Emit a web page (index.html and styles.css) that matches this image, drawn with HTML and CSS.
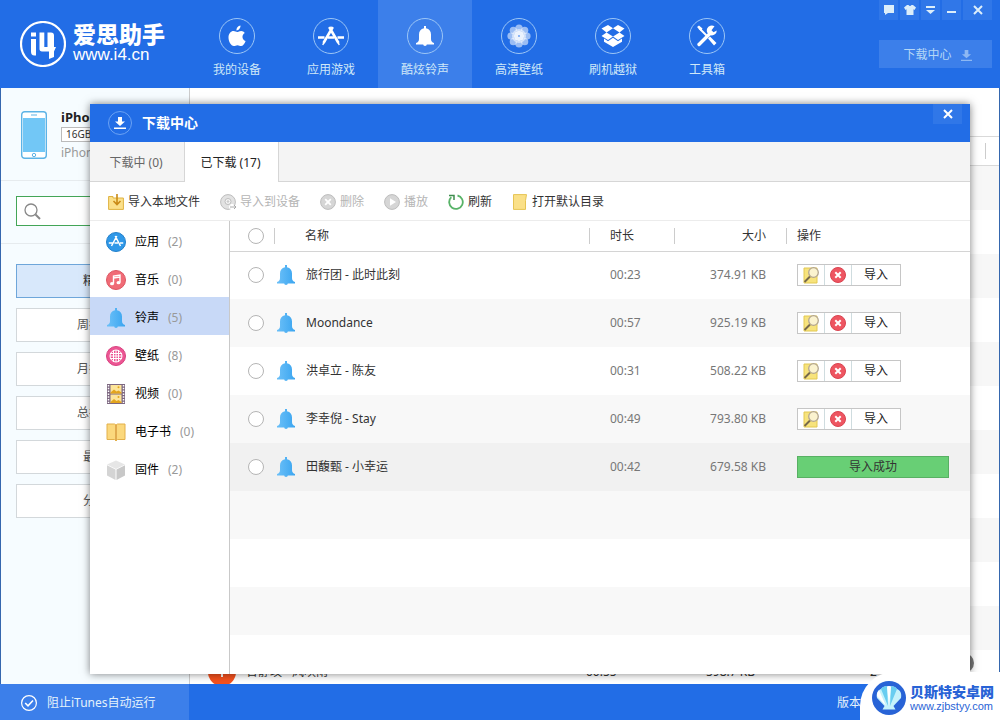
FILE: index.html
```html
<!DOCTYPE html>
<html lang="zh-CN">
<head>
<meta charset="utf-8">
<title>爱思助手</title>
<link rel="stylesheet" href="styles.css">
</head>
<body>
<svg class="defs" aria-hidden="true">
  <defs>
    <linearGradient id="bellFill" x1="0" x2="1" y1="0" y2="0"><stop offset="0" stop-color="#6cc0f8"/><stop offset="1" stop-color="#3aa5f0"/></linearGradient>
    <symbol id="bell" viewBox="0 0 20 20"><path d="M9 0h2v2.300c3.300.6 5 3 5 6.200v4.500c0 2 1 3.400 3 4v1.500h-7.200a1.800 1.500 0 0 1-3.600 0H1V17c2-.6 3-2 3-4V8.500c0-3.200 1.700-5.600 5-6.200z"/></symbol>
    <symbol id="apps" viewBox="0 0 26 20"><g fill="none" stroke="currentColor"><path d="M14.800 1 5.500 17M11.200 1l9.300 16" stroke-width="2.600"/><path d="m5.800 16.500-1 2.500M20.200 16.500l1 2.500" stroke-width="1.400"/><path d="M0 11.500h6.500M10 11.500h6M19.500 11.500H26" stroke-width="2.600"/></g></symbol>
    <symbol id="find" viewBox="0 0 16 18"><path d="M1 2h13v15H1z" fill="#f7e37c" stroke="#e2c850"/><path d="M7 10.500 1.500 16" stroke="#77694a" stroke-width="2"/><circle cx="10.500" cy="6.500" r="4.800" fill="#fbf3cf" stroke="#b3a690" stroke-width="1.300"/></symbol>
    <symbol id="del" viewBox="0 0 16 16"><circle cx="8" cy="8" r="7.500" fill="#ee5561" stroke="#d94450"/><path d="m5.300 5.300 5.400 5.400m0-5.400-5.400 5.400" stroke="#fff" stroke-width="2"/></symbol>
    <symbol id="download" viewBox="0 0 12 12"><path d="M4 0h4v4.500h3L6 9 1 4.500h3zM0 10.500h12V12H0z" fill="currentColor"/></symbol>
    <symbol id="cross" viewBox="0 0 10 10"><path d="m1 1 8 8M9 1 1 9" stroke="currentColor" stroke-width="2"/></symbol>
  </defs>
</svg>

<div class="app">
  <header class="topbar">
    <div class="brand">
      <svg class="brand-mark" viewBox="0 0 46 46"><circle cx="23" cy="23" r="22" fill="none" stroke="#fff" stroke-width="2.200"/><path d="M11 11.500h5v4h-5zM11 18h5v16.500h-1.500c-2.500 0-3.500-1.500-3.500-4zM19.500 11.500h4.800V26h3.200V11.500h3.500c2 0 3 1 3 3V26h2l-2 4.500V36l-5 2v-7.500h-7c-1.700 0-2.500-1-2.500-2.500z" fill="#fff"/></svg>
      <div class="brand-text"><strong>爱思助手</strong><span>www.i4.cn</span></div>
    </div>
    <nav class="nav">
      <a href="#" class="nav-item"><span class="ring"><svg width="18" height="22" viewBox="0 0 18 22"><path d="M12.500.5c.2 2.500-1.600 4.800-4 4.900C8.200 3 10.200.8 12.500.5zM9.200 7c1 0 2.200-1.100 4-1.100 1.500 0 2.800.8 3.600 2-3.500 2-2.800 6.800.8 8-1 2.800-2.700 5.100-4.500 5.100-1.400 0-2-.8-3.600-.8s-2.400.8-3.700.8C3 21 .5 16.500.5 12.500.5 8.500 3 6 5.500 6c1.600 0 2.700 1 3.700 1z" fill="#fff"/></svg></span>我的设备</a>
      <a href="#" class="nav-item"><span class="ring"><svg width="26" height="20"><use href="#apps"/></svg></span>应用游戏</a>
      <a href="#" class="nav-item active"><span class="ring"><svg width="20" height="20" fill="#fff"><use href="#bell"/></svg></span>酷炫铃声</a>
      <a href="#" class="nav-item"><span class="ring"><svg width="24" height="24" viewBox="0 0 24 24" fill="#fff"><g fill-opacity=".55"><circle cx="12" cy="4" r="3.600"/><circle cx="12" cy="20" r="3.600"/><circle cx="4" cy="12" r="3.600"/><circle cx="20" cy="12" r="3.600"/><circle cx="6.300" cy="6.300" r="3.600"/><circle cx="17.700" cy="17.700" r="3.600"/><circle cx="17.700" cy="6.300" r="3.600"/><circle cx="6.300" cy="17.700" r="3.600"/><circle cx="12" cy="12" r="7"/></g><circle cx="12" cy="12" r="5" fill-opacity=".8"/><circle cx="12" cy="12" r="1" fill="#6ea1f2"/></svg></span>高清壁纸</a>
      <a href="#" class="nav-item"><span class="ring"><svg width="24" height="22" viewBox="0 0 24 22" fill="#fff"><path d="M7 0l5 3.300L5.500 7.400.5 3.500zM17 0l-5 3.300 6.500 4.100 5-3.900zM.5 11l5-3.600L12 11.500l-5 3.500zM23.500 11l-5-3.600L12 11.500l5 3.500zM3 13.500l4 2.800 5-3.600 5 3.600 4-2.800v3.300L12 22l-9-5.200z"/></svg></span>刷机越狱</a>
      <a href="#" class="nav-item"><span class="ring"><svg width="22" height="22" viewBox="0 0 22 22"><path d="m3 3 8 8" stroke="#fff" stroke-width="2"/><path d="m1 2 2-1.500 3.500 3L5 6zM12 13.500l2-2 6.500 6.500-2.500 2.500z" fill="#fff"/><path d="M3 19.500 14.500 8" stroke="#fff" stroke-width="3.400" stroke-linecap="round"/><path d="M18.500 1.200a5 5 0 1 0 2.300 4.300l-3.300 1.700-2-2z" fill="#fff"/></svg></span>工具箱</a>
    </nav>
    <div class="top-right">
      <div class="window-buttons">
        <button aria-label="反馈"><svg width="12" height="10" viewBox="0 0 12 10"><path d="M1 0h10v8H5l-3 2V8H1z" fill="currentColor"/></svg></button>
        <button aria-label="皮肤"><svg width="12" height="10" viewBox="0 0 12 10"><path d="M3 0h1.500q1.500 2 3 0H9l3 2.500L10.500 5 9.500 4.300V10h-7V4.300l-1 .7L0 2.500z" fill="currentColor"/></svg></button>
        <button aria-label="菜单"><svg width="9" height="8" viewBox="0 0 9 8"><path d="M0 0h9v2H0zM0 4h9L4.500 8z" fill="currentColor"/></svg></button>
        <button aria-label="最小化"><svg width="9" height="8" viewBox="0 0 9 8"><path d="M0 5h9v2H0z" fill="currentColor"/></svg></button>
        <button class="wide" aria-label="关闭"><svg width="10" height="10"><use href="#cross"/></svg></button>
      </div>
      <button class="download-button">下载中心<svg width="11" height="11"><use href="#download"/></svg></button>
    </div>
  </header>

  <main class="main">
    <aside class="side">
      <section class="device">
        <svg width="26" height="48" viewBox="0 0 26 48"><rect x=".7" y=".7" width="24.600" height="46.600" rx="3" fill="#fff" stroke="#5cb3e6" stroke-width="1.400"/><path d="M2 7h22v34H2z" fill="#72c7f6"/><path d="M10 4h6" stroke="#5cb3e6"/><circle cx="13" cy="44" r="1.700" fill="none" stroke="#5cb3e6"/></svg>
        <div class="device-text"><strong>iPhone</strong><span class="capacity">16GB</span><span class="model">iPhone 6</span></div>
      </section>
      <section class="search"><label class="search-box"><svg width="17" height="17" viewBox="0 0 17 17" fill="none" stroke="#888"><circle cx="7" cy="7" r="6" stroke-width="1.300"/><path d="m11.500 11.500 4.500 4.500" stroke-width="2"/></svg><input type="text" aria-label="搜索铃声"></label></section>
      <nav class="side-menu">
        <button class="current">精选</button><button>周排行</button><button>月排行</button><button>总排行</button><button>最新</button><button>分类</button>
      </nav>
    </aside>
    <section class="songs">
      <div class="songs-head"><i></i></div>
      <div class="song"></div><div class="song"></div><div class="song"></div><div class="song"></div><div class="song"></div><div class="song"></div><div class="song"></div><div class="song"></div><div class="song"></div><div class="song"></div><div class="song"></div>
      <div class="song"><svg width="28" height="28" viewBox="0 0 28 28"><circle cx="14" cy="14" r="14" fill="#f4511e"/><path d="M14 7v12M8 13h12" stroke="#fff" stroke-width="2"/></svg><span>曾静玫 - 风吹雨</span><span>00:55</span><span>598.7 KB</span><span>2</span></div>
      <button class="to-top" aria-label="返回顶部"></button>
    </section>
  </main>

  <footer class="footer">
    <button class="itunes"><svg width="16" height="16" viewBox="0 0 16 16" fill="none" stroke="#fff"><circle cx="8" cy="8" r="7.400" stroke-width="1.200"/><path d="m4.200 8 2.800 2.800 5-5.300" stroke-width="1.600"/></svg>阻止iTunes自动运行</button>
    <span class="version">版本</span>
  </footer>

  <section class="dialog" role="dialog" aria-labelledby="dialog-title">
    <header class="dialog-head">
      <span class="dialog-icon"><svg width="12" height="12"><use href="#download"/></svg></span>
      <h1 id="dialog-title">下载中心</h1>
      <button class="dialog-close" aria-label="关闭下载中心"><svg width="10" height="10"><use href="#cross"/></svg></button>
    </header>
    <div class="tabs" role="tablist">
      <button role="tab" aria-selected="false">下载中 (0)</button>
      <button role="tab" aria-selected="true">已下载 (17)</button>
    </div>
    <div class="toolbar">
      <button><svg width="16" height="16" viewBox="0 0 16 16"><path d="M.6 2.500H5V4h10.400v11.400H.6z" fill="#fbe08a" stroke="#dfb240"/><path d="M9 0v10M5.500 7 9 10.500 12.500 7" fill="none" stroke="#c98a17" stroke-width="1.600"/></svg>导入本地文件</button>
      <button disabled><svg width="16" height="16" viewBox="0 0 16 16" fill="none" stroke="#bdbdbd"><circle cx="8" cy="8" r="7.400" fill="#e2e2e2"/><circle cx="8" cy="7.500" r="3" fill="#f7f7f7"/><circle cx="8" cy="7.500" r=".8"/><path d="M9 13h6m-3-3v6" stroke="#fff" stroke-width="3"/><path d="M10 13h6m-2-2 2 2-2 2" stroke="#aaa"/></svg>导入到设备</button>
      <button disabled><svg width="16" height="16" viewBox="0 0 16 16"><circle cx="8" cy="8" r="7.400" fill="#d6d6d6" stroke="#bdbdbd"/><path d="m5.200 5.200 5.600 5.600m0-5.600-5.600 5.600" stroke="#fff" stroke-width="1.800"/></svg>删除</button>
      <button disabled><svg width="16" height="16" viewBox="0 0 16 16"><circle cx="8" cy="8" r="7.400" fill="#d6d6d6" stroke="#bdbdbd"/><path d="M6 4.200v7.600L12 8z" fill="#fff"/></svg>播放</button>
      <button><svg width="16" height="16" viewBox="0 0 16 16" fill="none" stroke="#58b368"><path d="M9.500 1.500A6.800 6.800 0 1 1 3.300 3.200" stroke-width="1.800"/><path d="M1 1.500h5V6" stroke-width="1.500" stroke="#3f8c4e"/></svg>刷新</button>
      <button><svg width="16" height="16" viewBox="0 0 16 16"><path d="M1.500.6h13l-1 6v8.800h-12z" fill="#fae088" stroke="#e6c453"/></svg>打开默认目录</button>
    </div>
    <div class="dialog-body">
      <nav class="categories">
        <a href="#"><svg viewBox="0 0 20 20"><circle cx="10" cy="10" r="9.500" fill="#2f98e8" stroke="#2380ca"/><g fill="none" stroke="#fff" stroke-width="1.500"><path d="m10.800 4-5.300 10M9.200 4l5.300 10M2.800 11h4M8.500 11h3.500M14 11h3.200"/></g></svg>应用<span>(2)</span></a>
        <a href="#"><svg viewBox="0 0 20 20"><circle cx="10" cy="10" r="9.500" fill="#f06b76" stroke="#dc5662"/><path d="M7.500 13.500V6l6.500-1v7.500M7.500 8 14 7" fill="none" stroke="#fff" stroke-width="1.400"/><ellipse cx="6" cy="13.700" rx="2" ry="1.600" fill="#fff"/><ellipse cx="12.500" cy="12.700" rx="2" ry="1.600" fill="#fff"/></svg>音乐<span>(0)</span></a>
        <a href="#" class="selected"><svg fill="url(#bellFill)"><use href="#bell"/></svg>铃声<span>(5)</span></a>
        <a href="#"><svg viewBox="0 0 20 20"><circle cx="10" cy="10" r="9.500" fill="#ec5593" stroke="#d8427f"/><g fill="none" stroke="#fff"><circle cx="10" cy="10" r="6"/><path d="M7.500 4v12M12.500 4v12M4 7.500h12M4 12.500h12M10 4v12M4 10h12"/></g></svg>壁纸<span>(8)</span></a>
        <a href="#"><svg viewBox="0 0 20 20"><path d="M1 0h18v20H1z" fill="#7d6780"/><path d="M2.500 1v18M17.500 1v18" stroke="#fff" stroke-width="1.500" stroke-dasharray="1.500 1.300"/><path d="M4.500 1h11v8.400h-11zM4.500 10.600h11V19h-11z" fill="#fde59a"/><path d="m4.500 8.500 3.500-3 2.500 2 2-1 3 2v.9h-11zM4.500 18l3.500-3 2.500 2 2-1 3 2v1h-11z" fill="#e3a51e"/><circle cx="12.500" cy="3.300" r="1" fill="#e3a51e"/><circle cx="12.500" cy="12.900" r="1" fill="#e3a51e"/></svg>视频<span>(0)</span></a>
        <a href="#"><svg viewBox="0 0 20 20"><path d="M1 2h7.500L10 3l1.500-1H19v15.500h-7.500L10 19l-1.500-1.500H1z" fill="#fbd87d" stroke="#e3b04a"/><path d="M10 3v15" stroke="#d6993c" stroke-width="1.400"/></svg>电子书<span>(0)</span></a>
        <a href="#"><svg viewBox="0 0 20 20"><path d="m10 .5 9 4-9 4.500-9-4.500z" fill="#e6e6e6"/><path d="M1 5.200 9.500 9.500V20L1 15.500z" fill="#d4d4d4"/><path d="M19 5.200 10.500 9.500V20l8.500-4.500z" fill="#c8c8c8"/></svg>固件<span>(2)</span></a>
      </nav>
      <div class="files">
        <table>
          <colgroup><col class="c-check"><col><col class="c-time"><col class="c-size"><col class="c-act"></colgroup>
          <thead><tr><th><input type="checkbox" aria-label="全选"></th><th class="name">名称</th><th>时长</th><th class="size">大小</th><th>操作</th></tr></thead>
          <tbody>
            <tr><td><input type="checkbox" aria-label="旅行团 - 此时此刻"></td><td><div class="title"><svg><use href="#bell"/></svg>旅行团 - 此时此刻</div></td><td class="time">00:23</td><td class="size">374.91 KB</td><td><div class="actions"><button aria-label="查找"><svg width="16" height="18"><use href="#find"/></svg></button><button aria-label="删除"><svg width="16" height="16"><use href="#del"/></svg></button><button class="import">导入</button></div></td></tr>
            <tr><td><input type="checkbox" aria-label="Moondance"></td><td><div class="title"><svg><use href="#bell"/></svg>Moondance</div></td><td class="time">00:57</td><td class="size">925.19 KB</td><td><div class="actions"><button aria-label="查找"><svg width="16" height="18"><use href="#find"/></svg></button><button aria-label="删除"><svg width="16" height="16"><use href="#del"/></svg></button><button class="import">导入</button></div></td></tr>
            <tr><td><input type="checkbox" aria-label="洪卓立 - 陈友"></td><td><div class="title"><svg><use href="#bell"/></svg>洪卓立 - 陈友</div></td><td class="time">00:31</td><td class="size">508.22 KB</td><td><div class="actions"><button aria-label="查找"><svg width="16" height="18"><use href="#find"/></svg></button><button aria-label="删除"><svg width="16" height="16"><use href="#del"/></svg></button><button class="import">导入</button></div></td></tr>
            <tr><td><input type="checkbox" aria-label="李幸倪 - Stay"></td><td><div class="title"><svg><use href="#bell"/></svg>李幸倪 - Stay</div></td><td class="time">00:49</td><td class="size">793.80 KB</td><td><div class="actions"><button aria-label="查找"><svg width="16" height="18"><use href="#find"/></svg></button><button aria-label="删除"><svg width="16" height="16"><use href="#del"/></svg></button><button class="import">导入</button></div></td></tr>
            <tr class="hover"><td><input type="checkbox" aria-label="田馥甄 - 小幸运"></td><td><div class="title"><svg><use href="#bell"/></svg>田馥甄 - 小幸运</div></td><td class="time">00:42</td><td class="size">679.58 KB</td><td><div class="done">导入成功</div></td></tr>
            <tr><td colspan="5"></td></tr>
            <tr><td colspan="5"></td></tr>
            <tr><td colspan="5"></td></tr>
          </tbody>
        </table>
      </div>
    </div>
  </section>

  <a href="#" class="watermark">
    <svg width="34" height="34" viewBox="0 0 34 34"><circle cx="17" cy="17" r="17" fill="#2863d6"/><path d="M12.500 25 5 17c-1-5 1-8 4-9 1.500-2 4-3 6-2.500 1.300-.7 2.700-.7 4 0C21 5 23.500 6 25 8c3 1 5 4 4 9l-7.500 8 2 3.500h-13z" fill="#c5f2fb"/><path d="M16 25 9 8c1.500-2 4-3 6-2.500zM18 25l7-17c-1.500-2-4-3-6-2.500z" fill="#69cdf0"/><path d="M17 25 15 5.500q2-1 4 0zM14 25 5 15q0-4 2-6z" fill="#fff"/></svg>
    <span class="watermark-text"><strong>贝斯特安卓网</strong><span>www.zjbstyy.com</span></span>
  </a>
</div>
</body>
</html>
```

FILE: styles.css
```css
* { box-sizing: border-box; }
body {
  margin: 0;
  font: 12px/16px "Noto Sans", "Noto Sans CJK SC", sans-serif;
  color: #333;
}
button, input { font: inherit; color: inherit; margin: 0; padding: 0; border: 0; background: none; }
button { cursor: pointer; }
a { color: inherit; text-decoration: none; }
svg { display: block; flex: none; }
.defs { position: absolute; width: 0; height: 0; }

.app { position: relative; display: flex; flex-direction: column; height: 100vh; overflow: hidden; }

/* Top bar */
.topbar { display: flex; flex: none; height: 88px; background: #226de6; color: #fff; }
.brand { display: flex; align-items: center; gap: 7px; width: 190px; padding-left: 20px; }
.brand-mark { width: 46px; height: 46px; }
.brand-text { display: flex; flex-direction: column; padding-bottom: 2px; }
.brand-text strong { font: 900 23px/24px "Noto Sans CJK SC", sans-serif; }
.brand-text span { font: 17px/20px "Liberation Sans", sans-serif; }
.nav { display: flex; }
.nav-item { display: flex; flex-direction: column; align-items: center; gap: 8px; width: 94px; padding-top: 18px; color: #cfe8f8; }
.nav-item.active { background: #3c7fea; }
.ring { display: flex; align-items: center; justify-content: center; width: 36px; height: 36px; border: 1px solid #9cc6f6; border-radius: 50%; color: #fff; }
.top-right { display: flex; flex-direction: column; gap: 20px; width: 113px; margin: 0 8px 0 auto; }
.window-buttons { display: flex; gap: 2px; height: 20px; color: #dceefa; }
.window-buttons button { display: flex; align-items: center; justify-content: center; flex: 2; background: #3077e8; }
.window-buttons .wide { flex: 3; }
.download-button { display: flex; align-items: center; justify-content: center; gap: 9px; height: 28px; padding: 2px 0 0 4px; background: #3c7fea; color: #b5d7f6; }
.download-button svg { color: #8db8f3; }

/* Page behind the dialog */
.main { display: flex; flex: 1; min-height: 0; overflow: hidden; border: solid #3567ae; border-width: 0 1px; }
.side { width: 189px; flex: none; background: #f6fcff; border-right: 1px solid #ccc; }
.device { display: flex; gap: 14px; height: 93px; padding: 23px 0 0 20px; border-bottom: 1px solid #e6ebee; }
.device-text { display: flex; flex-direction: column; align-items: flex-start; line-height: 14px; }
.device-text strong { font-size: 13px; line-height: 12px; color: #222; }
.capacity { margin: 4px 0; padding: 0 4px; border: 1px solid #bbb; font-size: 10px; line-height: 13px; background: #fff; }
.model { color: #999; }
.search { height: 63px; padding: 15px 15px 0; border-bottom: 1px solid #e6ebee; }
.search-box { display: flex; align-items: center; gap: 6px; height: 30px; padding: 0 7px; background: #fff; border: 1px solid #43a557; }
.search-box input { flex: 1; min-width: 0; outline: 0; }
.side-menu { display: flex; flex-direction: column; gap: 10px; padding: 20px 15px; }
.side-menu button { height: 34px; background: #fff; border: 1px solid #d3d8db; color: #555; }
.side-menu .current { background: #d8e8fb; border-color: #6ea6da; color: #333; }
.songs { position: relative; flex: 1; background: #fff; }
.songs-head { display: flex; justify-content: flex-end; align-items: center; height: 30px; margin-top: 48px; padding-right: 13px; border: solid #d9d9d9; border-width: 1px 0; }
.songs-head i { width: 1px; height: 16px; background: #ccc; }
.song { display: grid; grid-template-columns: 38px 340px 120px 164px 1fr; align-items: center; height: 44px; padding-left: 18px; }
.song:nth-child(even) { background: #f7f7f7; }
.to-top { position: absolute; right: 25px; bottom: 11px; width: 20px; height: 20px; border-radius: 50%; background: #777; }

.footer { display: flex; flex: none; height: 36px; background: #226de6; color: #e4f2fb; }
.itunes { display: flex; align-items: center; gap: 10px; width: 189px; padding: 1px 0 0 21px; background: #3c7fea; }
.version { margin: 11px 139px 0 auto; }

/* Download centre dialog */
.dialog { position: absolute; inset: 104px 30px 46px 90px; display: flex; flex-direction: column; background: #fff; box-shadow: 0 0 8px rgba(0, 0, 0, .5); }
.dialog-head { display: flex; align-items: center; gap: 10px; flex: none; height: 38px; padding: 0 8px 0 18px; background: #226de6; color: #fff; }
.dialog-icon { display: flex; align-items: center; justify-content: center; width: 24px; height: 24px; border: 1px solid #6ba2f4; border-radius: 50%; }
.dialog-head h1 { margin: 0; font-size: 14px; line-height: 20px; }
.dialog-close { display: flex; align-items: center; justify-content: center; align-self: flex-start; width: 29px; height: 20px; margin-left: auto; background: #3077e8; }
.tabs { display: flex; flex: none; height: 40px; background: #f4f4f4; border-bottom: 1px solid #d6d6d6; }
.tabs button { width: 95px; padding: 2px 2px 0 0; border-right: 1px solid #d6d6d6; color: #666; }
.tabs [aria-selected="true"] { width: 94px; height: 40px; background: #fff; color: #222; }
.toolbar { display: flex; align-items: center; gap: 20px; flex: none; height: 39px; padding: 2px 18px 0; border-bottom: 1px solid #ececec; }
.toolbar button { display: flex; align-items: center; gap: 4px; }
.toolbar button:disabled { color: #b5b5b5; cursor: default; }
.dialog-body { display: flex; flex: 1; min-height: 0; }
.categories { width: 140px; flex: none; border-right: 1px solid #c9c9c9; }
.categories a { display: flex; align-items: center; gap: 9px; height: 38px; padding: 3px 0 0 16px; color: #000; }
.categories svg { width: 20px; height: 20px; }
.categories span { color: #999; }
.categories .selected { background: #c8d9f7; }

.files { flex: 1; min-width: 0; overflow: hidden; }
table { width: 100%; border-collapse: collapse; table-layout: fixed; }
.c-check { width: 45px; }
.c-time { width: 85px; }
.c-size { width: 112px; }
.c-act { width: 183px; }
th, td { padding: 0; text-align: left; font-weight: normal; }
thead tr { height: 30px; border-bottom: 1px solid #d4d4d4; }
th { background: linear-gradient(#ccc, #ccc) right center / 1px 16px no-repeat; }
th:last-child { background: none; }
th:nth-child(3), .time { padding-left: 20px; }
th:last-child, td:nth-child(5) { padding-left: 10px; }
.name { padding-left: 30px; }
.size { text-align: right; padding-right: 21px; }
td.size, .time { color: #777; }
tbody tr { height: 48px; }
tbody tr:nth-child(even) { background: #f8f8f8; }
tbody .hover { background: #f1f1f1; }
input[type="checkbox"] { appearance: none; display: block; width: 16px; height: 16px; margin-left: 18px; border: 1px solid #b5b5b5; border-radius: 50%; background: #fff; }
.title { display: flex; align-items: center; gap: 10px; padding-left: 1px; }
.title svg { width: 20px; height: 20px; fill: url(#bellFill); }
.actions { display: flex; width: 104px; height: 22px; background: #fff; border: 1px solid #c6c6c6; }
.actions button { display: flex; align-items: center; justify-content: center; width: 27px; border-right: 1px solid #cfdcdf; }
.actions .import { flex: 1; border: 0; color: #222; }
.done { width: 152px; height: 22px; border: 1px solid #58b063; background: #68cf75; line-height: 20px; text-align: center; }

.watermark { position: absolute; right: 0; bottom: 0; display: flex; align-items: center; gap: 4px; width: 140px; height: 48px; padding: 3px 0 0 12px; background: #fff; border-top-left-radius: 34px; color: #2863d6; }
.watermark-text { display: flex; flex-direction: column; }
.watermark strong { font-size: 14px; line-height: 16px; font-weight: 900; }
.watermark-text span { font: 11px/12px "Liberation Sans", sans-serif; }
```
